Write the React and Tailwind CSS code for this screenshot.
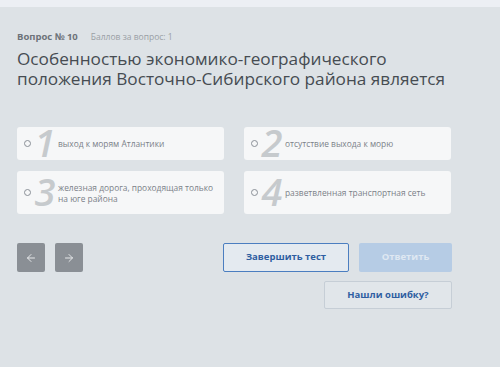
import { ArrowLeft, ArrowRight } from 'lucide-react';

const answers = [
  { n: '1', text: 'выход к морям Атлантики' },
  { n: '2', text: 'отсутствие выхода к морю' },
  { n: '3', text: 'железная дорога, проходящая только на юге района' },
  { n: '4', text: 'разветвленная транспортная сеть' },
];

function Answer({ n, text, tall }) {
  return (
    <div className={`flex items-center bg-[#f6f7f8] rounded-[3px] pl-[7px] pr-2 ${tall ? 'h-[43px]' : 'h-[33px]'}`}>
      <div className="w-[7px] h-[7px] rounded-full border border-[#8a9097] shrink-0" />
      <span className="w-[26px] ml-[1px] text-center text-[38px] leading-none italic font-semibold text-[#c6cacd] shrink-0 -mt-[3px]">
        {n}
      </span>
      <span className="text-[8.4px] leading-[11px] text-[#7b8188]">{text}</span>
    </div>
  );
}

export default function App() {
  return (
    <div className="w-[500px] h-[367px] bg-[#dde2e6] overflow-hidden" style={{ fontFamily: '"Open Sans", sans-serif' }}>
      <div className="h-[7px] bg-[#eceff4]" />

      <main className="px-[17px] pt-[23px]">
        {/* HEADER */}
        <div className="flex items-baseline gap-[13px] h-[12px]">
          <span className="text-[9.5px] font-bold text-[#6d737a]">Вопрос № 10</span>
          <span className="text-[8.5px] text-[#9a9fa5]">Баллов за вопрос: 1</span>
        </div>
        <h1 className="mt-[7px] text-[17.2px] leading-[20px] text-[#464c52] w-[460px]">
          Особенностью экономико-географического положения Восточно-Сибирского района является
        </h1>

        {/* ANSWERS */}
        <div className="mt-[38px] grid grid-cols-[207px_207px] gap-x-[20px] gap-y-[11px]">
          {answers.map((a) => (
            <Answer key={a.n} n={a.n} text={a.text} tall={a.n === '3' || a.n === '4'} />
          ))}
        </div>

        {/* CONTROLS */}
        <div className="mt-[29px] flex items-start">
          <div className="flex gap-[10px]">
            <button className="w-[28px] h-[29px] bg-[#8a8f95] rounded-[2px] flex items-center justify-center text-[#e6e8ea]">
              <ArrowLeft size={12} strokeWidth={2} />
            </button>
            <button className="w-[28px] h-[29px] bg-[#8a8f95] rounded-[2px] flex items-center justify-center text-[#e6e8ea]">
              <ArrowRight size={12} strokeWidth={2} />
            </button>
          </div>
          <div className="ml-auto mr-[31px] flex flex-col items-end gap-[9px]">
            <div className="flex gap-[10px]">
              <button className="w-[126px] h-[29px] border border-[#4b7ec0] rounded-[2px] bg-[#e4eaf0] text-[9.5px] font-bold text-[#2f5ea1]">
                Завершить тест
              </button>
              <button className="w-[93px] h-[29px] rounded-[2px] bg-[#b6cce5] text-[9.5px] font-bold text-[#dfe8f2]">
                Ответить
              </button>
            </div>
            <button className="w-[128px] h-[28px] border border-[#c6ced6] rounded-[2px] bg-[#e1e6ea] text-[9.5px] font-bold text-[#2f5ea1]">
              Нашли ошибку?
            </button>
          </div>
        </div>
      </main>
    </div>
  );
}
